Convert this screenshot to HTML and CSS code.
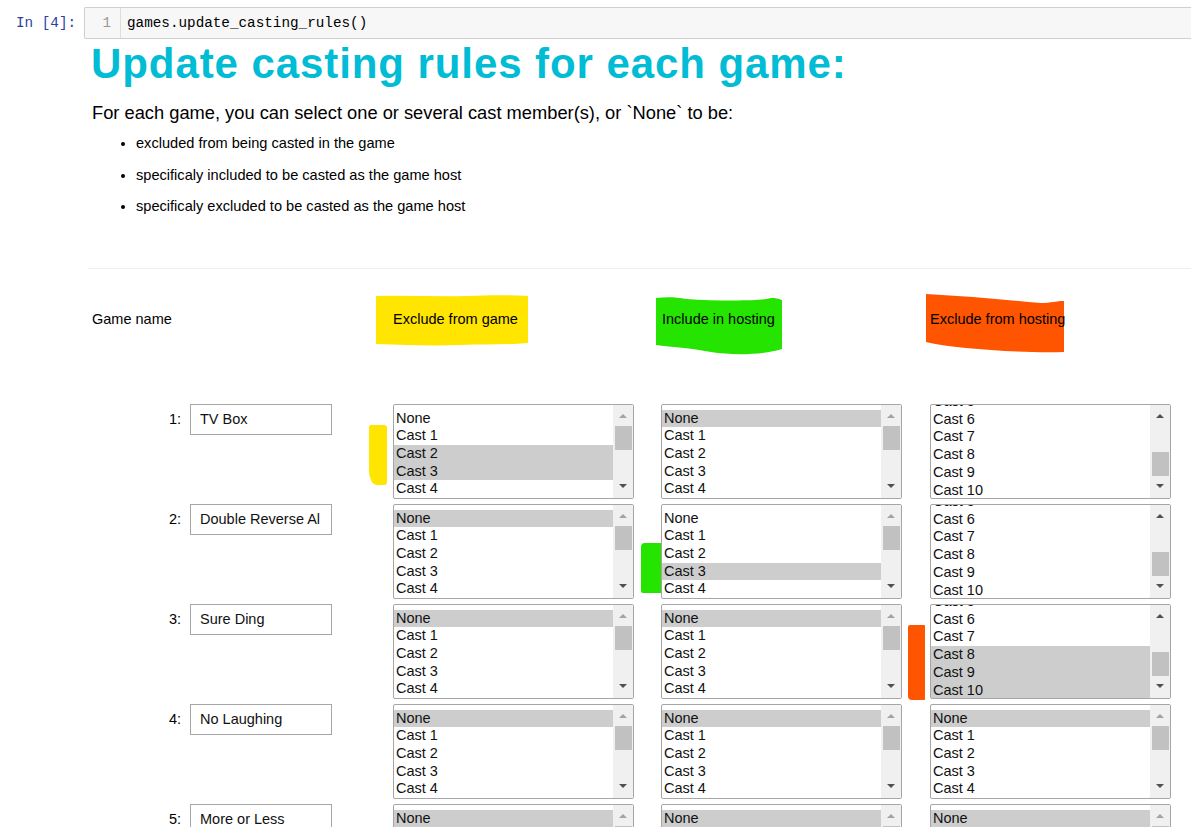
FILE: index.html
```html
<!DOCTYPE html>
<html>
<head>
<meta charset="utf-8">
<link rel="stylesheet" href="styles.css">
</head>
<body>
<div class="cell">
  <div class="prompt">In&nbsp;[4]:</div>
  <div class="code">
    <div class="lineno">1</div>
    <div class="src">games.update_casting_rules()</div>
  </div>
</div>

<div class="output">
  <h1 class="title">Update casting rules for each game:</h1>
  <p class="lead">For each game, you can select one or several cast member(s), or `None` to be:</p>
  <ul class="bullets">
    <li>excluded from being casted in the game</li>
    <li>specificaly included to be casted as the game host</li>
    <li>specificaly excluded to be casted as the game host</li>
  </ul>
  <div class="rule"></div>

  <div class="head">
    <div class="head-name">Game name</div>
    <div class="hcell">
      <svg class="hl hl-y" width="152" height="52" viewBox="0 0 152 52"><path d="M0 1 C30 0 60 2 90 1 C115 0 135 0 152 1 L152 48 C130 50 110 49 85 50 C55 51 30 50 0 49 Z" fill="#ffe500"/></svg>
      <span class="htext">Exclude from game</span>
    </div>
    <div class="g1"></div>
    <div class="hcell">
      <svg class="hl hl-g" width="126" height="59" viewBox="0 0 126 59"><path d="M0 1 C10 0 20 0 30 2 C60 4 100 4 110 2 C115 1 118 0 126 3 L126 52 C110 57 80 59 55 55 C35 51 15 50 0 48 Z" fill="#24e400"/></svg>
      <span class="htext">Include in hosting</span>
    </div>
    <div class="g2"></div>
    <div class="hcell">
      <svg class="hl hl-o" width="138" height="59" viewBox="0 0 138 59"><path d="M0 0 C40 2 80 6 115 9 C125 9 130 7 138 7 L138 58 C110 59 70 57 40 54 C20 52 8 50 0 48 Z" fill="#ff5500"/></svg>
      <span class="htext">Exclude from hosting</span>
    </div>
  </div>

  <div class="rows">
    <!-- row 1 -->
    <div class="row">
      <div class="num">1:</div>
      <div class="name">TV Box</div>
      <div class="g0"><div class="mark mark-y"></div></div>
      <div class="sel">
        <div class="opts"><div class="list">
          <div class="opt">None</div><div class="opt">Cast 1</div><div class="opt on">Cast 2</div><div class="opt on">Cast 3</div><div class="opt">Cast 4</div>
        </div></div>
        <div class="sb"><i class="up"></i><i class="thumb"></i><i class="down"></i></div>
      </div>
      <div class="g1"></div>
      <div class="sel">
        <div class="opts"><div class="list">
          <div class="opt on">None</div><div class="opt">Cast 1</div><div class="opt">Cast 2</div><div class="opt">Cast 3</div><div class="opt">Cast 4</div>
        </div></div>
        <div class="sb"><i class="up"></i><i class="thumb"></i><i class="down"></i></div>
      </div>
      <div class="g2"></div>
      <div class="sel end">
        <div class="opts"><div class="list">
          <div class="opt">Cast 5</div><div class="opt">Cast 6</div><div class="opt">Cast 7</div><div class="opt">Cast 8</div><div class="opt">Cast 9</div><div class="opt">Cast 10</div>
        </div></div>
        <div class="sb"><i class="up"></i><i class="thumb"></i><i class="down"></i></div>
      </div>
    </div>

    <!-- row 2 -->
    <div class="row">
      <div class="num">2:</div>
      <div class="name">Double Reverse Al</div>
      <div class="g0"></div>
      <div class="sel">
        <div class="opts"><div class="list">
          <div class="opt on">None</div><div class="opt">Cast 1</div><div class="opt">Cast 2</div><div class="opt">Cast 3</div><div class="opt">Cast 4</div>
        </div></div>
        <div class="sb"><i class="up"></i><i class="thumb"></i><i class="down"></i></div>
      </div>
      <div class="g1"><div class="mark mark-g"></div></div>
      <div class="sel">
        <div class="opts"><div class="list">
          <div class="opt">None</div><div class="opt">Cast 1</div><div class="opt">Cast 2</div><div class="opt on">Cast 3</div><div class="opt">Cast 4</div>
        </div></div>
        <div class="sb"><i class="up"></i><i class="thumb"></i><i class="down"></i></div>
      </div>
      <div class="g2"></div>
      <div class="sel end">
        <div class="opts"><div class="list">
          <div class="opt">Cast 5</div><div class="opt">Cast 6</div><div class="opt">Cast 7</div><div class="opt">Cast 8</div><div class="opt">Cast 9</div><div class="opt">Cast 10</div>
        </div></div>
        <div class="sb"><i class="up"></i><i class="thumb"></i><i class="down"></i></div>
      </div>
    </div>

    <!-- row 3 -->
    <div class="row">
      <div class="num">3:</div>
      <div class="name">Sure Ding</div>
      <div class="g0"></div>
      <div class="sel">
        <div class="opts"><div class="list">
          <div class="opt on">None</div><div class="opt">Cast 1</div><div class="opt">Cast 2</div><div class="opt">Cast 3</div><div class="opt">Cast 4</div>
        </div></div>
        <div class="sb"><i class="up"></i><i class="thumb"></i><i class="down"></i></div>
      </div>
      <div class="g1"></div>
      <div class="sel">
        <div class="opts"><div class="list">
          <div class="opt on">None</div><div class="opt">Cast 1</div><div class="opt">Cast 2</div><div class="opt">Cast 3</div><div class="opt">Cast 4</div>
        </div></div>
        <div class="sb"><i class="up"></i><i class="thumb"></i><i class="down"></i></div>
      </div>
      <div class="g2"><div class="mark mark-o"></div></div>
      <div class="sel end">
        <div class="opts"><div class="list">
          <div class="opt">Cast 5</div><div class="opt">Cast 6</div><div class="opt">Cast 7</div><div class="opt on">Cast 8</div><div class="opt on">Cast 9</div><div class="opt on">Cast 10</div>
        </div></div>
        <div class="sb"><i class="up"></i><i class="thumb"></i><i class="down"></i></div>
      </div>
    </div>

    <!-- row 4 -->
    <div class="row">
      <div class="num">4:</div>
      <div class="name">No Laughing</div>
      <div class="g0"></div>
      <div class="sel">
        <div class="opts"><div class="list">
          <div class="opt on">None</div><div class="opt">Cast 1</div><div class="opt">Cast 2</div><div class="opt">Cast 3</div><div class="opt">Cast 4</div>
        </div></div>
        <div class="sb"><i class="up"></i><i class="thumb"></i><i class="down"></i></div>
      </div>
      <div class="g1"></div>
      <div class="sel">
        <div class="opts"><div class="list">
          <div class="opt on">None</div><div class="opt">Cast 1</div><div class="opt">Cast 2</div><div class="opt">Cast 3</div><div class="opt">Cast 4</div>
        </div></div>
        <div class="sb"><i class="up"></i><i class="thumb"></i><i class="down"></i></div>
      </div>
      <div class="g2"></div>
      <div class="sel">
        <div class="opts"><div class="list">
          <div class="opt on">None</div><div class="opt">Cast 1</div><div class="opt">Cast 2</div><div class="opt">Cast 3</div><div class="opt">Cast 4</div>
        </div></div>
        <div class="sb"><i class="up"></i><i class="thumb"></i><i class="down"></i></div>
      </div>
    </div>

    <!-- row 5 -->
    <div class="row">
      <div class="num">5:</div>
      <div class="name">More or Less</div>
      <div class="g0"></div>
      <div class="sel">
        <div class="opts"><div class="list">
          <div class="opt on">None</div><div class="opt">Cast 1</div><div class="opt">Cast 2</div><div class="opt">Cast 3</div><div class="opt">Cast 4</div>
        </div></div>
        <div class="sb"><i class="up"></i><i class="thumb"></i><i class="down"></i></div>
      </div>
      <div class="g1"></div>
      <div class="sel">
        <div class="opts"><div class="list">
          <div class="opt on">None</div><div class="opt">Cast 1</div><div class="opt">Cast 2</div><div class="opt">Cast 3</div><div class="opt">Cast 4</div>
        </div></div>
        <div class="sb"><i class="up"></i><i class="thumb"></i><i class="down"></i></div>
      </div>
      <div class="g2"></div>
      <div class="sel">
        <div class="opts"><div class="list">
          <div class="opt on">None</div><div class="opt">Cast 1</div><div class="opt">Cast 2</div><div class="opt">Cast 3</div><div class="opt">Cast 4</div>
        </div></div>
        <div class="sb"><i class="up"></i><i class="thumb"></i><i class="down"></i></div>
      </div>
    </div>
  </div>
</div>
</body>
</html>
```

FILE: styles.css
```css
html, body {
  margin: 0;
  padding: 0;
  background: #fff;
}
body {
  font-family: "Liberation Sans", Arial, sans-serif;
  font-size: 14.5px;
  color: #000;
  height: 827px;
  overflow: hidden;
}

/* ---------- code cell ---------- */
.cell {
  display: flex;
  align-items: center;
  padding-top: 7px;
}
.prompt {
  width: 84px;
  box-sizing: border-box;
  padding-left: 16px;
  font-family: "Liberation Mono", monospace;
  font-size: 14.3px;
  color: #303f9f;
}
.code {
  flex: 1;
  display: flex;
  height: 32px;
  box-sizing: border-box;
  background: #f7f7f7;
  border: 1px solid #cfcfcf;
  border-right: none;
  border-radius: 2px 0 0 2px;
  font-family: "Liberation Mono", monospace;
  font-size: 14.3px;
}
.lineno {
  width: 36px;
  box-sizing: border-box;
  padding-right: 9px;
  border-right: 1px solid #dddddd;
  color: #999;
  display: flex;
  align-items: center;
  justify-content: flex-end;
}
.src {
  display: flex;
  align-items: center;
  padding-left: 6px;
  color: #000;
}

/* ---------- markdown output ---------- */
.output {
  margin-left: 88px;
}
.title {
  margin: 3px 0 0 0;
  padding-left: 3px;
  font-family: "Liberation Sans", Arial, sans-serif;
  font-weight: bold;
  font-size: 42px;
  letter-spacing: 0.92px;
  line-height: 44px;
  color: #00bcd4;
}
.lead {
  margin: 16px 0 0 0;
  padding-left: 4px;
  font-size: 18.3px;
  line-height: 22px;
}
.bullets {
  margin: 9px 0 0 0;
  padding-left: 48px;
  font-size: 14.6px;
  line-height: 20px;
}
.bullets li {
  margin-bottom: 11.5px;
}
.rule {
  margin-top: 52px;
  border-top: 1px solid #eeeeee;
}

/* ---------- header ---------- */
.head {
  display: flex;
  height: 60px;
  margin-top: 20px;
  padding-left: 4px;
}
.head-name {
  width: 301px;
  display: flex;
  align-items: center;
}
.hcell {
  position: relative;
  width: 241px;
  display: flex;
  align-items: center;
}
.hl {
  position: absolute;
}
.hl-y { left: -17px; top: 6px; }
.hl-g { left: -5px; top: 8px; }
.hl-o { left: -4px; top: 5px; }
.htext {
  position: relative;
  white-space: nowrap;
}
.hcell:nth-child(4) .htext { padding-left: 1px; }

/* ---------- rows ---------- */
.rows {
  margin-top: 55px;
  padding-left: 4px;
}
.row {
  display: flex;
  align-items: flex-start;
  height: 100px;
}
.num {
  width: 98px;
  box-sizing: border-box;
  padding-right: 9px;
  text-align: right;
  line-height: 31px;
}
.name {
  width: 142px;
  height: 31px;
  box-sizing: border-box;
  border: 1px solid #a6a6a6;
  padding-left: 9px;
  line-height: 29px;
  white-space: nowrap;
  overflow: hidden;
  color: #111;
}
.g0 { width: 61px; align-self: stretch; }
.g1 { width: 27px; align-self: stretch; }
.g2 { width: 28px; align-self: stretch; }

.mark-y {
  width: 18px;
  height: 60px;
  margin: 21px 0 0 37px;
  background: #ffe500;
  border-radius: 2px 3px 3px 8px / 2px 3px 3px 14px;
}
.mark-g {
  width: 20px;
  height: 50px;
  margin: 39px 0 0 7px;
  background: #24e400;
  border-radius: 4px 0 0 2px;
}
.mark-o {
  width: 17px;
  height: 75px;
  margin: 21px 0 0 6px;
  background: #ff5500;
  border-radius: 2px 1px 1px 4px;
}

/* ---------- custom list boxes ---------- */
.sel {
  width: 241px;
  height: 95px;
  box-sizing: border-box;
  border: 1px solid #a6a6a6;
  border-radius: 2px;
  display: flex;
  background: #fff;
}
.opts {
  flex: 1;
  overflow: hidden;
}
.list {
  padding-top: 4.5px;
}
.sel.end .list {
  padding-top: 0;
  margin-top: -11.9px;
}
.opt {
  height: 17.7px;
  line-height: 17.7px;
  padding-left: 2px;
  white-space: nowrap;
  color: #111;
}
.opt.on {
  background: #cdcdcd;
}
.sb {
  position: relative;
  width: 20px;
  background: #f0f0f0;
}
.sb i {
  position: absolute;
  display: block;
}
.sb .up {
  left: 6px;
  top: 9px;
  width: 0;
  height: 0;
  border-left: 4px solid transparent;
  border-right: 4px solid transparent;
  border-bottom: 4px solid #a3a3a3;
}
.sb .down {
  left: 6px;
  top: 79px;
  width: 0;
  height: 0;
  border-left: 4px solid transparent;
  border-right: 4px solid transparent;
  border-top: 4px solid #505050;
}
.sb .thumb {
  left: 2px;
  right: 1px;
  top: 21px;
  height: 24px;
  background: #c1c1c1;
}
.sel.end .sb .thumb { top: 47px; }
.sel.end .sb .up { border-bottom-color: #505050; }
```
